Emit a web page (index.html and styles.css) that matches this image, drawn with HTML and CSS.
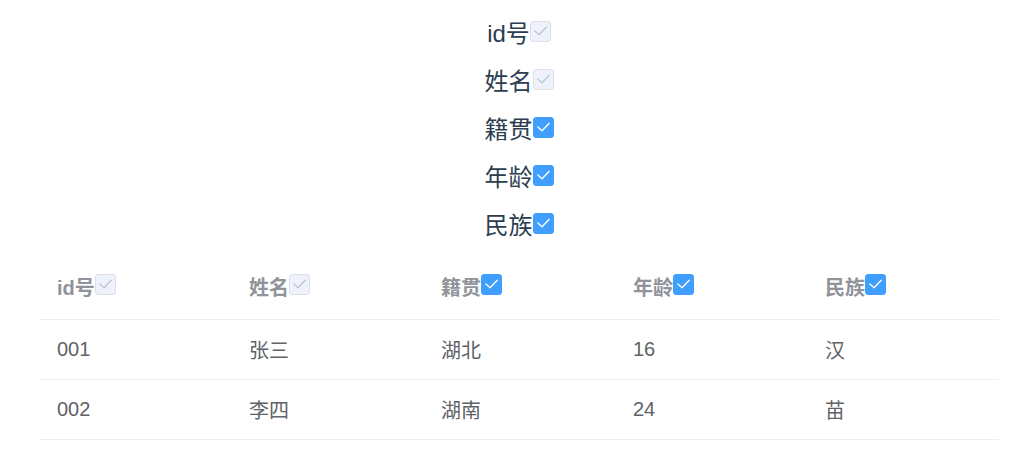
FILE: index.html
```html
<!DOCTYPE html>
<html lang="zh-CN">
<head>
<meta charset="utf-8">
<link rel="stylesheet" href="styles.css">
</head>
<body>
<div class="app">
  <ul class="opts">
    <li class="opt">id号<span class="cb cb-disabled"><svg viewBox="0 0 20 20"><polyline points="4,9.5 8.5,13.5 16,5.5"/></svg></span></li>
    <li class="opt">姓名<span class="cb cb-disabled"><svg viewBox="0 0 20 20"><polyline points="4,9.5 8.5,13.5 16,5.5"/></svg></span></li>
    <li class="opt">籍贯<span class="cb cb-on"><svg viewBox="0 0 20 20"><polyline points="4,9.5 8.5,13.5 16,5.5"/></svg></span></li>
    <li class="opt">年龄<span class="cb cb-on"><svg viewBox="0 0 20 20"><polyline points="4,9.5 8.5,13.5 16,5.5"/></svg></span></li>
    <li class="opt">民族<span class="cb cb-on"><svg viewBox="0 0 20 20"><polyline points="4,9.5 8.5,13.5 16,5.5"/></svg></span></li>
  </ul>
  <table class="grid">
    <thead>
      <tr>
        <th>id号<span class="cb cb-disabled"><svg viewBox="0 0 20 20"><polyline points="4,9.5 8.5,13.5 16,5.5"/></svg></span></th>
        <th>姓名<span class="cb cb-disabled"><svg viewBox="0 0 20 20"><polyline points="4,9.5 8.5,13.5 16,5.5"/></svg></span></th>
        <th>籍贯<span class="cb cb-on"><svg viewBox="0 0 20 20"><polyline points="4,9.5 8.5,13.5 16,5.5"/></svg></span></th>
        <th>年龄<span class="cb cb-on"><svg viewBox="0 0 20 20"><polyline points="4,9.5 8.5,13.5 16,5.5"/></svg></span></th>
        <th>民族<span class="cb cb-on"><svg viewBox="0 0 20 20"><polyline points="4,9.5 8.5,13.5 16,5.5"/></svg></span></th>
      </tr>
    </thead>
    <tbody>
      <tr><td>001</td><td>张三</td><td>湖北</td><td>16</td><td>汉</td></tr>
      <tr><td>002</td><td>李四</td><td>湖南</td><td>24</td><td>苗</td></tr>
    </tbody>
  </table>
</div>
</body>
</html>
```

FILE: styles.css
```css
html, body {
  margin: 0;
  padding: 0;
  background: #ffffff;
}
body {
  padding: 8px;
}
.app {
  padding-left: 11px;
  font-family: "Liberation Sans", Arial, "Noto Sans CJK SC", sans-serif;
  color: #2c3e50;
  text-align: center;
}
.opts {
  list-style: none;
  margin: 2px 0 0;
  padding: 0;
}
.opt {
  height: 48px;
  line-height: 48px;
  font-size: 24px;
}
.cb {
  display: inline-block;
  box-sizing: border-box;
  width: 21px;
  height: 21px;
  border-radius: 3px;
  border: 1px solid #dcdfe6;
  vertical-align: baseline;
  position: relative;
}
.cb svg {
  position: absolute;
  left: 0;
  top: 0;
  width: 19px;
  height: 19px;
  fill: none;
  stroke-width: 1.4;
  stroke-linecap: round;
  stroke-linejoin: round;
}
.cb-disabled {
  background: #edf2fc;
  border-color: #dcdfe6;
}
.cb-disabled svg {
  stroke: #c0c4cc;
}
.cb-on {
  background: #409eff;
  border-color: #409eff;
}
.cb-on svg {
  stroke: #ffffff;
}
.grid {
  width: 960px;
  margin: 10px auto 0;
  border-collapse: collapse;
  table-layout: fixed;
  text-align: left;
  font-size: 20px;
}
.grid th, .grid td {
  padding: 0 18px;
  border-bottom: 1px solid #ebeef5;
}
.grid th {
  height: 53px;
  padding-bottom: 6px;
  color: #909399;
  font-weight: bold;
}
.grid td {
  height: 59px;
  color: #606266;
  font-weight: normal;
}
```
